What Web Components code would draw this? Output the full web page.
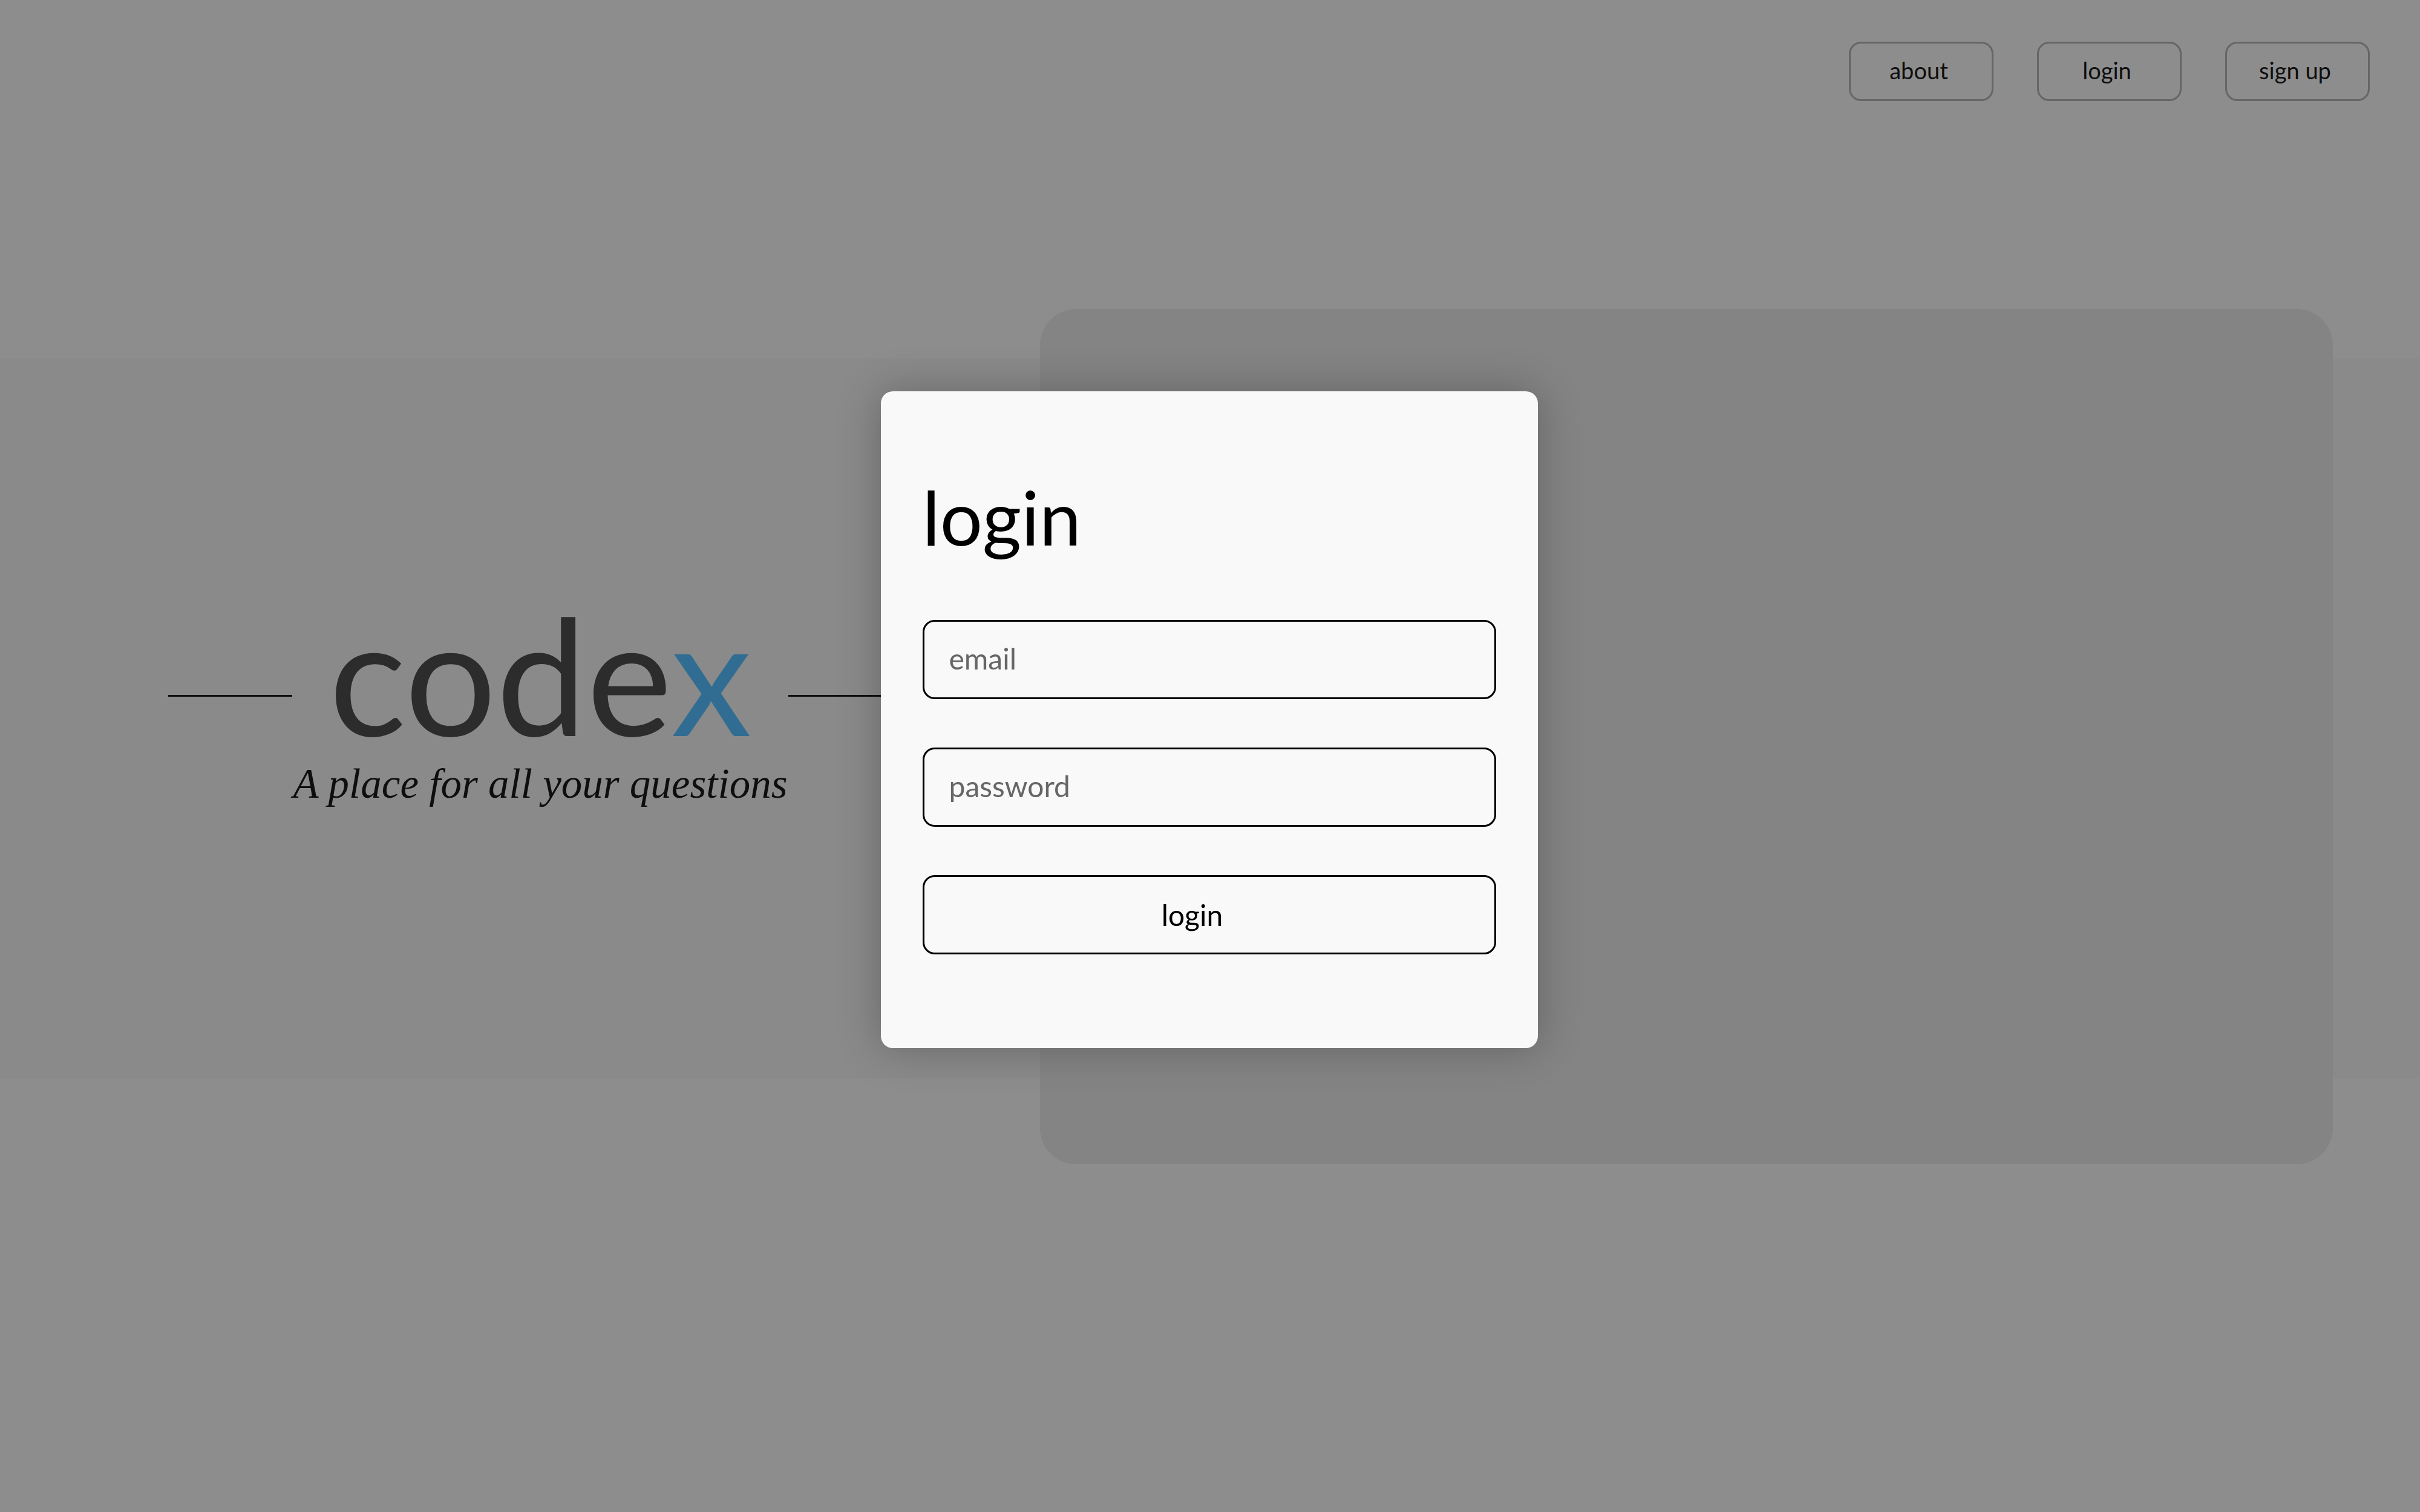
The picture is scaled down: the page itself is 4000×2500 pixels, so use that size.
<!DOCTYPE html>
<html lang="en">
<head>
<meta charset="utf-8">
<title>codex</title>
<style>
  body { margin: 0; font-family: Lato, "Open Sans", sans-serif; color: #0e0e0e; background: #8d8d8d; }
</style>
</head>
<body>
<codex-page>
  <nav-button slot="nav">about</nav-button>
  <nav-button slot="nav">login</nav-button>
  <nav-button slot="nav">sign up</nav-button>
  <codex-brand slot="brand">A place for all your questions</codex-brand>
</codex-page>
<login-dialog heading="login">
  <text-field type="email" name="email" label="email"></text-field>
  <text-field type="password" name="password" label="password"></text-field>
  <submit-button>login</submit-button>
</login-dialog>

<script>
const define = (name, html, setup) => customElements.define(name, class extends HTMLElement {
  constructor() {
    super();
    this.attachShadow({ mode: "open" }).innerHTML = html;
  }
  connectedCallback() {
    if (setup) setup(this, this.shadowRoot);
  }
});

define("nav-button", `
  <style>
    :host { display: block; }
    button {
      box-sizing: border-box; width: 239px; height: 98px; padding: 0 8px 4px 0;
      border: 3px solid #666; border-radius: 20px; background: none;
      font: 400 38px/48px Lato, sans-serif; color: inherit; white-space: nowrap;
    }
  </style>
  <button type="button"><slot></slot></button>`);

define("codex-brand", `
  <style>
    :host { display: block; padding-bottom: 64px; }
    .row { display: flex; align-items: center; justify-content: space-between; }
    hr { width: 205px; height: 3px; margin: 72px 0 0; border: 0; background: #0e0e0e; }
    h1 { margin: 0; font-weight: 400; font-size: 267px; line-height: 280px; color: #2c2c2c; }
    h1 span { color: #316d92; }
    p { margin: 0; text-align: center; font: italic 69px/84px "Liberation Serif", serif; white-space: nowrap; }
  </style>
  <div class="row"><hr><h1>code<span>x</span></h1><hr></div>
  <p><slot></slot></p>`);

define("codex-page", `
  <style>
    :host { display: flex; flex-direction: column; min-height: 100vh; }
    nav { display: flex; justify-content: flex-end; gap: 72px; padding: 69px 83px 0; }
    main {
      display: grid; grid-template: 100% / 1230px 1fr; column-gap: 211px; align-items: center;
      height: 1190px; margin-top: 426px; padding: 0 144px 0 278px; box-sizing: border-box;
      background: #8a8a8a;
    }
    .panel { align-self: start; height: 1414px; margin-top: -82px; border-radius: 60px; background: #848484; }
  </style>
  <nav><slot name="nav"></slot></nav>
  <main><slot name="brand"></slot><div class="panel"></div></main>`);

define("login-dialog", `
  <style>
    :host {
      position: fixed; inset: 0; display: grid; place-items: center;
      box-sizing: border-box; padding: 0 3px 120px 0; color: #000;
    }
    form {
      box-sizing: border-box; width: 1086px; padding: 126px 69px 155px;
      display: flex; flex-direction: column; gap: 80px;
      border-radius: 20px; background: #f9f9f9; box-shadow: 0 0 70px rgba(0, 0, 0, .26);
    }
    h2 { margin: 0 0 10px; font-weight: 400; font-size: 124px; line-height: 162px; }
  </style>
  <form role="dialog" aria-labelledby="title"><h2 id="title"></h2><slot></slot></form>`,
  (host, root) => { root.querySelector("h2").textContent = host.getAttribute("heading"); });

define("text-field", `
  <style>
    :host { display: block; }
    input {
      display: block; box-sizing: border-box; width: 100%; height: 131px; padding: 0 41px 4px;
      border: 3px solid #000; border-radius: 20px; background: none;
      font: 400 48px/60px Lato, sans-serif; color: #000;
    }
    input::placeholder { color: #666; opacity: 1; }
  </style>
  <input>`,
  (host, root) => {
    const input = root.querySelector("input");
    input.type = host.getAttribute("type");
    input.name = host.getAttribute("name");
    input.placeholder = host.getAttribute("label");
    input.setAttribute("aria-label", host.getAttribute("label"));
  });

define("submit-button", `
  <style>
    :host { display: block; }
    button {
      display: block; box-sizing: border-box; width: 100%; height: 131px; padding: 0 56px 0 0;
      border: 3px solid #000; border-radius: 20px; background: none;
      font: 400 48px/60px Lato, sans-serif; color: #000;
    }
  </style>
  <button type="submit"><slot></slot></button>`);
</script>
</body>
</html>
